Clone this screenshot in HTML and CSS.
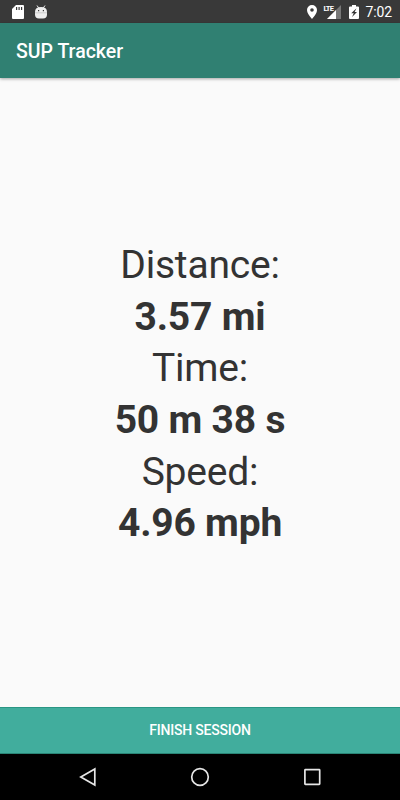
FILE: index.html
```html
<!DOCTYPE html>
<html lang="en">
<head>
  <meta charset="UTF-8" />
  <meta name="viewport" content="width=device-width, initial-scale=1.0"/>
  <title>SUP Tracker</title>
  <link rel="stylesheet" href="styles.css">
</head>
<body>

  <!-- Status Bar -->
  <div class="status-bar">
    <div class="notifications">
      <svg width="12" height="14" viewBox="0 0 12 14">
        <path fill="#fff" fill-rule="evenodd" d="M4 0h7q1 0 1 1v12q0 1-1 1H1q-1 0-1-1V4zM4 2v3h1.200V2zM6.500 2v3h1.200V2zM9 2v3h1.200V2z"/>
      </svg>
      <svg width="12" height="14" viewBox="0 0 12 14">
        <path d="M2 0.500l1.700 2.400M10 0.500L8.300 2.900" stroke="#eee" stroke-width="1"/>
        <path fill="#eee" fill-rule="evenodd" d="M0 7q0-5 6-5t6 5v2.500q0 4-4 4H4q-4 0-4-4zM3 5v1.200h1.200V5zM7.800 5v1.200H9V5z"/>
        <path d="M0 7.800h12" stroke="#c4c4c4" stroke-width="0.800"/>
      </svg>
    </div>
    <div class="system-icons">
      <svg width="10" height="14" viewBox="0 0 10 14">
        <path fill="#fff" fill-rule="evenodd" d="M5 0a5 5 0 0 1 5 5q0 3.500-5 9-5-5.500-5-9a5 5 0 0 1 5-5zm0 3.200a1.800 1.800 0 1 0 0 3.600 1.800 1.800 0 0 0 0-3.600z"/>
      </svg>
      <div class="signal">
        <span class="network">LTE</span>
        <svg width="14" height="14" viewBox="0 0 14 14">
          <path fill="#787878" d="M14 0v14H0z"/>
          <path fill="#fff" d="M9 5V14H0z"/>
        </svg>
      </div>
      <svg class="battery" width="10" height="14" viewBox="0 0 10 14">
        <path fill="#fff" d="M3 0h4v1.500h2q1 0 1 1V13q0 1-1 1H1q-1 0-1-1V2.500q0-1 1-1h2z"/>
        <path fill="#333" d="M7.500 3.200L2.200 8.200h2.600l-1.800 3.800L8 7H5.600z"/>
      </svg>
      <span class="clock">7:02</span>
    </div>
  </div>

  <header class="app-bar">
    <h1>SUP Tracker</h1>
  </header>

  <!-- Session Stats -->
  <main class="stats">
    <p>Distance:</p>
    <p class="value">3.57 mi</p>
    <p>Time:</p>
    <p class="value">50 m 38 s</p>
    <p>Speed:</p>
    <p class="value">4.96 mph</p>
  </main>

  <button class="finish-btn">FINISH SESSION</button>

  <!-- Navigation Bar -->
  <nav class="nav-bar">
    <svg width="18" height="20" viewBox="0 0 18 20">
      <path d="M15.800 2v16L1.800 10z"/>
    </svg>
    <svg width="20" height="20" viewBox="0 0 20 20">
      <circle cx="10" cy="10" r="8.300"/>
    </svg>
    <svg width="18" height="20" viewBox="0 0 18 20">
      <rect x="1.900" y="2.700" width="14.800" height="14.600" rx="0.500"/>
    </svg>
  </nav>

</body>
</html>
```
FILE: styles.css
```css
* {
  margin: 0;
  padding: 0;
  box-sizing: border-box;
  font-family: Roboto, sans-serif;
}

body {
  display: flex;
  flex-direction: column;
  height: 100vh;
  background: #fafafa;
  color: #333;
}

svg {
  display: block;
}

.status-bar {
  display: flex;
  justify-content: space-between;
  align-items: center;
  height: 23px;
  padding: 0 8px 0 12px;
  background: #393939;
  color: #fff;
}

.notifications {
  display: flex;
  gap: 11px;
}

.system-icons {
  display: flex;
  align-items: center;
}

.signal {
  position: relative;
  margin-left: 10px;
}

.network {
  position: absolute;
  top: 0;
  left: -4px;
  font-size: 7.5px;
  font-weight: 700;
  line-height: 7px;
  letter-spacing: -0.8px;
}

.battery {
  margin-left: 8px;
}

.clock {
  margin-left: 6px;
  font-size: 14px;
  line-height: 24px;
  letter-spacing: -0.1px;
}

.app-bar {
  display: flex;
  align-items: center;
  height: 55px;
  padding: 2px 16px 0;
  background: #308072;
  color: #fff;
  box-shadow: 0 1px 3px rgba(0, 0, 0, 0.35);
}

.app-bar h1 {
  font-size: 19.5px;
  font-weight: 500;
}

.stats {
  flex: 1;
  display: flex;
  flex-direction: column;
  justify-content: center;
  padding-top: 5px;
  text-align: center;
  font-size: 39px;
  line-height: 51.7px;
  letter-spacing: -0.2px;
}

.value {
  font-weight: bold;
}

.finish-btn {
  height: 47px;
  padding-bottom: 1px;
  border: none;
  border-top: 1px solid #2a9684;
  border-bottom: 1px solid #2a8576;
  background: #41ad9d;
  color: #fff;
  font-size: 14px;
  font-weight: 500;
  letter-spacing: -0.2px;
}

.nav-bar {
  display: flex;
  justify-content: space-between;
  align-items: center;
  height: 46px;
  padding: 0 79px;
  background: #000;
}

.nav-bar svg {
  fill: none;
  stroke: #e6e6e6;
  stroke-width: 1.7;
}
```
